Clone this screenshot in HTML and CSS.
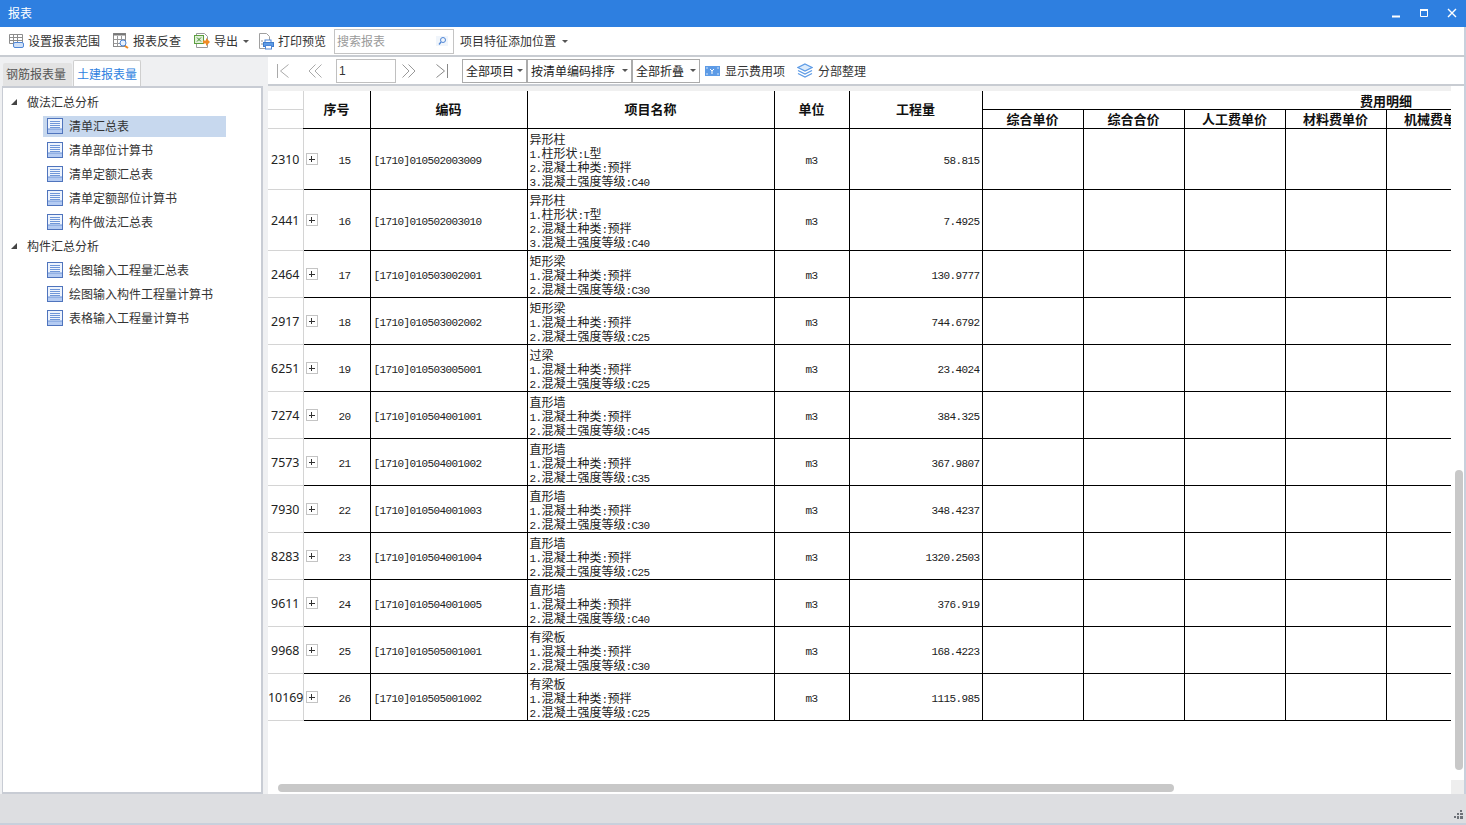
FILE: index.html
```html
<!DOCTYPE html>
<html>
<head>
    <title>报表</title>
    <link rel="stylesheet" href="styles.css">
</head>
<body>
    <svg class="defs" width="0" height="0">
        <symbol id="doc" viewBox="0 0 16 16">
            <rect x="0.5" y="0.5" width="15" height="15" fill="#eef4fd" stroke="#4f74bd"/>
            <rect x="1" y="11" width="14" height="4" fill="#b4cbf2"/>
            <path d="M3 3.5h10M3 5.5h10M3 7.5h10M3 9.5h10" stroke="#6f96d8"/>
            <path d="M1 11h14" stroke="#6f96d8"/>
        </symbol>
    </svg>

    <div class="titlebar">
        <span class="title">报表</span>
        <div class="winbtns">
            <svg width="10" height="10"><path d="M1 8.5h8" stroke="#fff" stroke-width="2"/></svg>
            <svg width="10" height="10"><path d="M1.5 2.5h7v6h-7z" fill="none" stroke="#fff"/><path d="M1 2h8" stroke="#fff" stroke-width="2"/></svg>
            <svg width="10" height="10"><path d="M1 1l8 8M9 1l-8 8" stroke="#fff" stroke-width="1.4"/></svg>
        </div>
    </div>

    <div class="toolbar">
        <div class="tool w-range">
            <svg width="16" height="16"><path d="M1.5 1.5h13v9h-13zM1.5 4.5h13M5.5 1.5v9M9.5 1.5v9M1.5 7.5h13" fill="#fff" stroke="#8d8d8d"/><rect x="5.5" y="9.5" width="10" height="5" rx="1.5" fill="#cfe0f7" stroke="#4f86d6"/></svg>
            <span>设置报表范围</span>
        </div>
        <div class="tool w-check">
            <svg width="16" height="16"><rect x="0.5" y="0.5" width="12" height="13" fill="#fff" stroke="#8a8a8a"/><path d="M0.5 1.5h12" stroke="#777" stroke-width="2"/><path d="M0.5 6.5h12M0.5 10.5h7M4.5 3v10M8.5 3v4" stroke="#999"/><circle cx="10" cy="10" r="3" fill="#e8f1fc" stroke="#4f86d6"/><path d="M12 13l3 2" stroke="#f08a24" stroke-width="2"/></svg>
            <span>报表反查</span>
        </div>
        <div class="tool w-export">
            <svg width="16" height="16"><path d="M2.5 0.5h8l3 3v11h-11z" fill="#fff" stroke="#9a9a9a"/><rect x="0.5" y="2.5" width="9" height="8" fill="#dff0d8" stroke="#5c9e3f"/><path d="M3 4.5l4 4M7 4.5l-4 4" stroke="#3f8a2a"/><path d="M9 7.5h3v-2.500l4 4-4 4v-2.500h-3z" fill="#f08a24"/></svg>
            <span>导出</span>
            <i class="caret"></i>
        </div>
        <div class="tool w-print">
            <svg width="16" height="17"><path d="M1.500 0.500h7l3 3v12h-10z" fill="#fff" stroke="#a0a0a0"/><rect x="7" y="7" width="6" height="3" fill="#fff" stroke="#4f86d6"/><rect x="5.500" y="9.500" width="10" height="4" fill="#5d9be6" stroke="#3f7ccc"/><rect x="7.500" y="12.500" width="6" height="3.500" fill="#fff" stroke="#4f86d6"/><path d="M3 8h2M3 11h2" stroke="#999"/></svg>
            <span>打印预览</span>
        </div>
        <div class="search">
            <span class="search-hint">搜索报表</span>
            <svg width="12" height="12"><rect width="12" height="10" y="1" fill="#f0f5fb"/><circle cx="7" cy="5" r="2.500" fill="none" stroke="#4f86d6"/><path d="M5 7L3 9.500" stroke="#4f86d6" stroke-width="1.300"/></svg>
        </div>
        <div class="tool w-pos">
            <span>项目特征添加位置</span>
            <i class="caret"></i>
        </div>
    </div>

    <div class="main">
        <div class="left">
            <div class="tabs">
                <div class="tab">钢筋报表量</div>
                <div class="tab tab-on">土建报表量</div>
            </div>
            <div class="tree">
                <div class="node"><i class="arrow"></i>做法汇总分析</div>
                <div class="leaf leaf-on"><svg width="16" height="16"><use href="#doc"/></svg>清单汇总表</div>
                <div class="leaf"><svg width="16" height="16"><use href="#doc"/></svg>清单部位计算书</div>
                <div class="leaf"><svg width="16" height="16"><use href="#doc"/></svg>清单定额汇总表</div>
                <div class="leaf"><svg width="16" height="16"><use href="#doc"/></svg>清单定额部位计算书</div>
                <div class="leaf"><svg width="16" height="16"><use href="#doc"/></svg>构件做法汇总表</div>
                <div class="node"><i class="arrow"></i>构件汇总分析</div>
                <div class="leaf"><svg width="16" height="16"><use href="#doc"/></svg>绘图输入工程量汇总表</div>
                <div class="leaf"><svg width="16" height="16"><use href="#doc"/></svg>绘图输入构件工程量计算书</div>
                <div class="leaf"><svg width="16" height="16"><use href="#doc"/></svg>表格输入工程量计算书</div>
            </div>
        </div>

        <div class="right">
            <div class="pager">
                <svg class="pg-first" width="14" height="14"><path d="M1.500 0v14M12.500 0.500L4.500 7l8 6.500" fill="none" stroke="#aaa"/></svg>
                <svg class="pg-prev" width="15" height="14"><path d="M7.500 0.500L1 7l6.500 6.500M13.500 0.500L7 7l6.500 6.500" fill="none" stroke="#aaa"/></svg>
                <div class="pg-input">1</div>
                <svg class="pg-next" width="15" height="14"><path d="M1.500 0.500L8 7l-6.500 6.500M7.500 0.500L14 7l-6.500 6.500" fill="none" stroke="#999"/></svg>
                <svg class="pg-last" width="14" height="14"><path d="M12.500 0v14M1.500 0.500L9.500 7l-8 6.500" fill="none" stroke="#888"/></svg>
                <div class="select w-s1">全部项目<i class="caret"></i></div>
                <div class="select w-s2">按清单编码排序<i class="caret"></i></div>
                <div class="select w-s3">全部折叠<i class="caret"></i></div>
                <div class="pg-tool t-fee">
                    <svg width="15" height="10"><rect width="15" height="10" fill="#5d9be6"/><path d="M5 3l2 2 2-2M7 5v3" fill="none" stroke="#fff"/><path d="M1 2h2M12 2h2M1 8h2M12 8h2" stroke="#cfe2fa"/></svg>
                    <span>显示费用项</span>
                </div>
                <div class="pg-tool t-sort">
                    <svg width="16" height="15"><path d="M8 1l7 3.500-7 3.500-7-3.500z" fill="#dcebfb" stroke="#5d9be6" stroke-width="1.300"/><path d="M1 7.500l7 3.500 7-3.500M1 10.500l7 3.500 7-3.500" fill="none" stroke="#5d9be6" stroke-width="1.300"/></svg>
                    <span>分部整理</span>
                </div>
            </div>

            <div class="report">
                <div class="sheet">
                    <table class="grid">
                        <colgroup>
                            <col class="c-row"><col class="c-seq"><col class="c-code"><col class="c-name"><col class="c-unit"><col class="c-qty">
                            <col class="c-fee"><col class="c-fee"><col class="c-fee"><col class="c-fee"><col class="c-fee"><col class="c-fee"><col class="c-fee"><col class="c-fee">
                        </colgroup>
                        <thead>
                            <tr class="h1">
                                <th class="gut"></th>
                                <th class="seq-h" rowspan="2">序号</th>
                                <th rowspan="2">编码</th>
                                <th rowspan="2">项目名称</th>
                                <th rowspan="2">单位</th>
                                <th rowspan="2">工程量</th>
                                <th class="fee-top" colspan="8">费用明细</th>
                            </tr>
                            <tr class="h2">
                                <th class="gut"></th>
                                <th>综合单价</th><th>综合合价</th><th>人工费单价</th><th>材料费单价</th><th>机械费单价</th><th></th><th></th><th></th>
                            </tr>
                        </thead>
                        <tbody>
                            <tr class="r4">
                                <td class="gut">2310</td>
                                <td class="seq"><div class="seq-in"><i class="plus"></i><span>15</span></div></td>
                                <td class="code">[1710]010502003009</td>
                                <td class="name"><div>异形柱</div><div><span class="m">1.</span>柱形状<span class="m">:L</span>型</div><div><span class="m">2.</span>混凝土种类<span class="m">:</span>预拌</div><div><span class="m">3.</span>混凝土强度等级<span class="m">:C40</span></div></td>
                                <td class="unit">m3</td>
                                <td class="qty">58.815</td>
                                <td></td><td></td><td></td><td></td><td></td><td></td><td></td><td></td>
                            </tr>
                            <tr class="r4">
                                <td class="gut">2441</td>
                                <td class="seq"><div class="seq-in"><i class="plus"></i><span>16</span></div></td>
                                <td class="code">[1710]010502003010</td>
                                <td class="name"><div>异形柱</div><div><span class="m">1.</span>柱形状<span class="m">:T</span>型</div><div><span class="m">2.</span>混凝土种类<span class="m">:</span>预拌</div><div><span class="m">3.</span>混凝土强度等级<span class="m">:C40</span></div></td>
                                <td class="unit">m3</td>
                                <td class="qty">7.4925</td>
                                <td></td><td></td><td></td><td></td><td></td><td></td><td></td><td></td>
                            </tr>
                            <tr class="r3">
                                <td class="gut">2464</td>
                                <td class="seq"><div class="seq-in"><i class="plus"></i><span>17</span></div></td>
                                <td class="code">[1710]010503002001</td>
                                <td class="name"><div>矩形梁</div><div><span class="m">1.</span>混凝土种类<span class="m">:</span>预拌</div><div><span class="m">2.</span>混凝土强度等级<span class="m">:C30</span></div></td>
                                <td class="unit">m3</td>
                                <td class="qty">130.9777</td>
                                <td></td><td></td><td></td><td></td><td></td><td></td><td></td><td></td>
                            </tr>
                            <tr class="r3">
                                <td class="gut">2917</td>
                                <td class="seq"><div class="seq-in"><i class="plus"></i><span>18</span></div></td>
                                <td class="code">[1710]010503002002</td>
                                <td class="name"><div>矩形梁</div><div><span class="m">1.</span>混凝土种类<span class="m">:</span>预拌</div><div><span class="m">2.</span>混凝土强度等级<span class="m">:C25</span></div></td>
                                <td class="unit">m3</td>
                                <td class="qty">744.6792</td>
                                <td></td><td></td><td></td><td></td><td></td><td></td><td></td><td></td>
                            </tr>
                            <tr class="r3">
                                <td class="gut">6251</td>
                                <td class="seq"><div class="seq-in"><i class="plus"></i><span>19</span></div></td>
                                <td class="code">[1710]010503005001</td>
                                <td class="name"><div>过梁</div><div><span class="m">1.</span>混凝土种类<span class="m">:</span>预拌</div><div><span class="m">2.</span>混凝土强度等级<span class="m">:C25</span></div></td>
                                <td class="unit">m3</td>
                                <td class="qty">23.4024</td>
                                <td></td><td></td><td></td><td></td><td></td><td></td><td></td><td></td>
                            </tr>
                            <tr class="r3">
                                <td class="gut">7274</td>
                                <td class="seq"><div class="seq-in"><i class="plus"></i><span>20</span></div></td>
                                <td class="code">[1710]010504001001</td>
                                <td class="name"><div>直形墙</div><div><span class="m">1.</span>混凝土种类<span class="m">:</span>预拌</div><div><span class="m">2.</span>混凝土强度等级<span class="m">:C45</span></div></td>
                                <td class="unit">m3</td>
                                <td class="qty">384.325</td>
                                <td></td><td></td><td></td><td></td><td></td><td></td><td></td><td></td>
                            </tr>
                            <tr class="r3">
                                <td class="gut">7573</td>
                                <td class="seq"><div class="seq-in"><i class="plus"></i><span>21</span></div></td>
                                <td class="code">[1710]010504001002</td>
                                <td class="name"><div>直形墙</div><div><span class="m">1.</span>混凝土种类<span class="m">:</span>预拌</div><div><span class="m">2.</span>混凝土强度等级<span class="m">:C35</span></div></td>
                                <td class="unit">m3</td>
                                <td class="qty">367.9807</td>
                                <td></td><td></td><td></td><td></td><td></td><td></td><td></td><td></td>
                            </tr>
                            <tr class="r3">
                                <td class="gut">7930</td>
                                <td class="seq"><div class="seq-in"><i class="plus"></i><span>22</span></div></td>
                                <td class="code">[1710]010504001003</td>
                                <td class="name"><div>直形墙</div><div><span class="m">1.</span>混凝土种类<span class="m">:</span>预拌</div><div><span class="m">2.</span>混凝土强度等级<span class="m">:C30</span></div></td>
                                <td class="unit">m3</td>
                                <td class="qty">348.4237</td>
                                <td></td><td></td><td></td><td></td><td></td><td></td><td></td><td></td>
                            </tr>
                            <tr class="r3">
                                <td class="gut">8283</td>
                                <td class="seq"><div class="seq-in"><i class="plus"></i><span>23</span></div></td>
                                <td class="code">[1710]010504001004</td>
                                <td class="name"><div>直形墙</div><div><span class="m">1.</span>混凝土种类<span class="m">:</span>预拌</div><div><span class="m">2.</span>混凝土强度等级<span class="m">:C25</span></div></td>
                                <td class="unit">m3</td>
                                <td class="qty">1320.2503</td>
                                <td></td><td></td><td></td><td></td><td></td><td></td><td></td><td></td>
                            </tr>
                            <tr class="r3">
                                <td class="gut">9611</td>
                                <td class="seq"><div class="seq-in"><i class="plus"></i><span>24</span></div></td>
                                <td class="code">[1710]010504001005</td>
                                <td class="name"><div>直形墙</div><div><span class="m">1.</span>混凝土种类<span class="m">:</span>预拌</div><div><span class="m">2.</span>混凝土强度等级<span class="m">:C40</span></div></td>
                                <td class="unit">m3</td>
                                <td class="qty">376.919</td>
                                <td></td><td></td><td></td><td></td><td></td><td></td><td></td><td></td>
                            </tr>
                            <tr class="r3">
                                <td class="gut">9968</td>
                                <td class="seq"><div class="seq-in"><i class="plus"></i><span>25</span></div></td>
                                <td class="code">[1710]010505001001</td>
                                <td class="name"><div>有梁板</div><div><span class="m">1.</span>混凝土种类<span class="m">:</span>预拌</div><div><span class="m">2.</span>混凝土强度等级<span class="m">:C30</span></div></td>
                                <td class="unit">m3</td>
                                <td class="qty">168.4223</td>
                                <td></td><td></td><td></td><td></td><td></td><td></td><td></td><td></td>
                            </tr>
                            <tr class="r3">
                                <td class="gut">10169</td>
                                <td class="seq"><div class="seq-in"><i class="plus"></i><span>26</span></div></td>
                                <td class="code">[1710]010505001002</td>
                                <td class="name"><div>有梁板</div><div><span class="m">1.</span>混凝土种类<span class="m">:</span>预拌</div><div><span class="m">2.</span>混凝土强度等级<span class="m">:C25</span></div></td>
                                <td class="unit">m3</td>
                                <td class="qty">1115.985</td>
                                <td></td><td></td><td></td><td></td><td></td><td></td><td></td><td></td>
                            </tr>
                        </tbody>
                    </table>
                </div>
                <!-- scrollbars sit over the sheet -->
                <div class="vbar"></div>
                <div class="hbar"></div>
                <div class="corner"></div>
            </div>
        </div>
    </div>

    <div class="status">
        <svg width="9" height="9"><path d="M6 0h2v2H6zM3 3h2v2H3zM6 3h3v2H6zM0 6h2v2H0zM3 6h2v3H3zM6 6h3v3H6z" fill="#6d7278"/></svg>
    </div>
</body>
</html>
```

FILE: styles.css
```css
* {
    box-sizing: border-box;
}

html, body {
    margin: 0;
    height: 825px;
    overflow: hidden;
}

body {
    display: flex;
    flex-direction: column;
    background-color: #eff0f2;
    color: #333;
    font-family: "Noto Sans CJK SC", "Noto Sans", sans-serif;
    font-size: 12px;
    line-height: 16px;
}

.defs {
    position: absolute;
}

.caret {
    display: inline-block;
    width: 0;
    height: 0;
    border-left: 3px solid transparent;
    border-right: 3px solid transparent;
    border-top: 3px solid #555;
}

/* title bar */
.titlebar {
    flex: none;
    height: 27px;
    padding: 0 9px 1px 8px;
    display: flex;
    align-items: center;
    justify-content: space-between;
    background-color: #2e7fe0;
    color: #fff;
}

.winbtns {
    display: flex;
    gap: 18px;
}

/* top toolbar */
.toolbar {
    flex: none;
    height: 30px;
    padding: 3px 2px 3px 8px;
    display: flex;
    align-items: center;
    background-color: #fff;
    border-bottom: 2px solid #c8ccd2;
    border-right: 2px solid #c8d0dc;
}

.tool {
    display: flex;
    align-items: center;
    gap: 4px;
}

.w-range { width: 105px; }
.w-check { width: 81px; }
.w-export { width: 64px; }
.w-print { width: 76px; }
.w-export .caret { margin-left: 1px; }
.w-pos { margin-left: 6px; }
.w-pos .caret { margin-left: 2px; }

.search {
    width: 120px;
    height: 25px;
    padding: 0 5px 0 2px;
    display: flex;
    align-items: center;
    justify-content: space-between;
    border: 1px solid #c4c4c4;
    color: #999;
}

.search-hint {
    color: #9a9a9a;
}

/* left side */
.main {
    flex: 1;
    display: flex;
    min-height: 0;
}

.left {
    flex: none;
    width: 268px;
    padding: 0 5px 0 2px;
    display: flex;
    flex-direction: column;
}

.tabs {
    flex: none;
    height: 29px;
    display: flex;
    align-items: flex-end;
    gap: 1px;
    padding-left: 1px;
}

.tab {
    width: 69px;
    height: 23px;
    padding: 3px 0 0 3px;
    background-color: #e3e3e3;
    color: #555;
    border-radius: 2px 2px 0 0;
}

.tab-on {
    width: 68px;
    height: 26px;
    padding: 5px 0 0 3px;
    background-color: #fff;
    color: #2e7fe0;
    border: 1px solid #cfcfcf;
    border-bottom: none;
}

.tree {
    flex: 1;
    padding-top: 2px;
    background-color: #fff;
    border: 2px solid #c8ccd4;
    border-left-width: 1px;
}

.node {
    height: 24px;
    padding-left: 8px;
    display: flex;
    align-items: center;
    gap: 10px;
}

.arrow {
    width: 0;
    height: 0;
    border-left: 6px solid transparent;
    border-bottom: 6px solid #444;
}

.leaf {
    height: 24px;
    margin-left: 40px;
    width: 183px;
    padding: 0 0 1px 4px;
    display: flex;
    align-items: center;
    gap: 6px;
}

.leaf-on {
    background: linear-gradient(#c7d8ee, #c7d8ee) no-repeat 0 2px / 100% 21px;
}

/* right side */
.right {
    flex: 1;
    min-width: 0;
    display: flex;
    flex-direction: column;
    border-right: 2px solid #c8d0dc;
}

.pager {
    flex: none;
    height: 29px;
    padding: 1px 0 1px 8px;
    display: flex;
    align-items: center;
    background-color: #fff;
    border-bottom: 2px solid #c8ccd2;
}

.pg-prev { margin-left: 18px; }
.pg-next { margin-left: 5px; }
.pg-last { margin-left: 19px; }

.pg-input {
    width: 60px;
    height: 24px;
    margin-left: 13px;
    padding: 3px 2px;
    border: 1px solid #c0c0c0;
    font-family: "Liberation Sans", sans-serif;
}

.select {
    height: 24px;
    display: flex;
    align-items: center;
    justify-content: space-between;
    padding: 0 3px 0 3px;
    border: 1px solid #ababab;
    color: #222;
}

.select + .select {
    padding-left: 3px;
}

.w-s1 { width: 65px; margin-left: 13px; }
.w-s2 { width: 105px; }
.w-s3 { width: 68px; }

.pg-tool {
    display: flex;
    align-items: center;
    gap: 5px;
}

.t-fee { margin-left: 5px; }
.t-sort { margin-left: 12px; }

/* report sheet */
.report {
    flex: 1;
    min-height: 0;
    position: relative;
    background-color: #fff;
}

.sheet {
    width: 1183px;
    height: 100%;
    padding-top: 5px;
    overflow: hidden;
    background: linear-gradient(#f0f0f0, #f0f0f0) no-repeat 0 0 / 100% 5px;
}

.grid {
    table-layout: fixed;
    width: 1522px;
    border-collapse: collapse;
    color: #222;
    background-color: #fff;
}

.c-row { width: 35px; }
.c-seq { width: 67px; }
.c-code { width: 157px; }
.c-name { width: 247px; }
.c-unit { width: 75px; }
.c-qty { width: 133px; }
.c-fee { width: 101px; }

.grid th, .grid td {
    padding: 0;
    border: 1px solid #000;
}

.grid tr:first-child th {
    border-top: none;
}

.grid th {
    font-size: 13px;
    font-weight: 700;
    line-height: 14px;
    color: #111;
    overflow: hidden;
    white-space: nowrap;
}

.h1 { height: 18px; }
.h2 { height: 19px; }
.r4 { height: 61px; }
.r3 { height: 47px; }

.grid .gut {
    padding-top: 2px;
    border-left: none;
    border-top: 1px solid #d4d4d4;
    border-bottom: 1px solid #d4d4d4;
    border-right: 1px solid #d4d4d4;
    font-family: "Noto Sans", sans-serif;
    font-size: 12.4px;
    text-align: center;
}

.grid .seq-h, .grid .seq {
    border-left: 1px solid #d4d4d4;
}

.grid .fee-top {
    border-left: 1px solid #000;
    padding-top: 3px;
}

.seq, .code, .unit, .qty, .m {
    font-family: "Liberation Mono", monospace;
    font-size: 11px;
    letter-spacing: -0.6px;
}

/* keep the smaller latin runs from stretching the 14px lines */
.m {
    line-height: 0;
}

.seq-in {
    display: flex;
    align-items: center;
    padding: 4px 0 0 2px;
}

.seq-in span {
    flex: 1;
    padding-left: 2px;
    text-align: center;
}

.plus {
    width: 12px;
    height: 12px;
    margin-top: -3px;
    border: 1px solid #c4c4c4;
    background: linear-gradient(#333, #333) no-repeat center / 6px 1px,
                linear-gradient(#333, #333) no-repeat center / 1px 6px;
}

.grid .code {
    padding: 4px 0 0 3px;
}

.grid .name {
    padding: 3px 0 0 2px;
    line-height: 14px;
    white-space: nowrap;
}

.grid .unit {
    padding-top: 4px;
    text-align: center;
}

.grid .qty {
    padding: 4px 2px 0 0;
    text-align: right;
}

/* scrollbars */
.vbar {
    position: absolute;
    top: 384px;
    left: 1187px;
    width: 8px;
    height: 300px;
    border-radius: 4px;
    background-color: #c8c8c8;
}

.hbar {
    position: absolute;
    top: 698px;
    left: 10px;
    width: 896px;
    height: 8px;
    border-radius: 4px;
    background-color: #c8c8c8;
}

.corner {
    position: absolute;
    right: 0;
    bottom: 0;
    width: 13px;
    height: 14px;
    background-color: #eeeeee;
}

/* status bar */
.status {
    flex: none;
    height: 31px;
    padding: 0 3px 4px 0;
    display: flex;
    align-items: flex-end;
    justify-content: flex-end;
    background-color: #dddee1;
    border-bottom: 2px solid #c8d0dc;
}
```
